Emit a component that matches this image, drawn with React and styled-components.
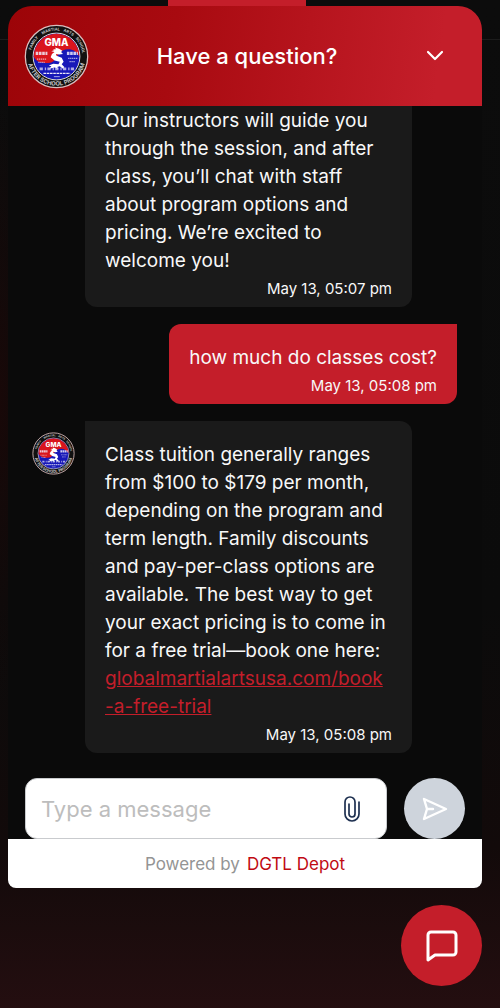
import { useId, useState } from 'react';
import styled, { createGlobalStyle } from 'styled-components';

const GlobalStyle = createGlobalStyle`
  * {
    box-sizing: border-box;
  }
  body {
    margin: 0;
    background-color: #0b0b0b;
    font-family: Inter, 'Liberation Sans', sans-serif;
  }
  button, input {
    font-family: inherit;
  }
`;

const Page = styled.div`
  position: relative;
  display: flex;
  flex-direction: column;
  height: 100vh;
  padding: 6px 18px 22px 8px;
  background:
    radial-gradient(ellipse 40px 300px at 0 400px, #180808, transparent),
    linear-gradient(#0c0c0c 0, #0b0b0b 60%, #120a0a 84%, #240e10 100%);
`;

const PageTab = styled.div`
  position: absolute;
  top: 0;
  left: 168px;
  width: 138px;
  height: 20px;
  background-color: #c41e2a;
`;

const PageRule = styled.div`
  position: absolute;
  top: 39px;
  left: 0;
  right: 0;
  height: 1px;
  background-color: #1c1c1c;
`;

const Chat = styled.section`
  position: relative;
  display: flex;
  flex-direction: column;
  flex: 1;
  min-height: 0;
  overflow: hidden;
  border-radius: 24px 24px 8px 8px;
  background-color: #0a0a0a;
`;

const Header = styled.header`
  display: grid;
  flex-shrink: 0;
  grid-template-columns: 66px 1fr 62px;
  align-items: center;
  height: 100px;
  padding: 0 16px;
  background: linear-gradient(98deg, #9c0408, #a80a10 35%, #c41e2a 90%);
`;

const Title = styled.h1`
  margin: 0;
  color: white;
  font-size: 22px;
  line-height: 28px;
  font-weight: 500;
  text-align: center;
`;

const IconButton = styled.button`
  display: flex;
  justify-content: center;
  padding: 0;
  border: 0;
  background: none;
  cursor: pointer;
`;

const Messages = styled.div`
  display: flex;
  flex-direction: column;
  justify-content: flex-end;
  flex: 1;
  min-height: 0;
  gap: 17px;
  overflow: hidden;
  padding: 0 25px 25px 24px;
`;

const Row = styled.div`
  display: flex;
  flex-shrink: 0;
  justify-content: ${({ $mine }) => ($mine ? 'flex-end' : 'flex-start')};
`;

const AvatarSlot = styled.div`
  flex: 0 0 53px;
  padding-top: 11px;
`;

const Bubble = styled.div`
  max-width: 327px;
  padding: 20px 20px 5px;
  border-radius: ${({ $mine }) => ($mine ? '12px 0 12px 12px' : '0 12px 12px 12px')};
  background-color: ${({ $mine }) => ($mine ? '#c41e2a' : '#1a1a1a')};
  color: #f8f8f8;
`;

const Text = styled.p`
  margin: 0;
  font-size: 19px;
  line-height: 28px;
`;

const Time = styled.time`
  display: block;
  font-size: 15px;
  line-height: 27px;
  text-align: right;
`;

const TrialLink = styled.a`
  color: #c41e2a;
  white-space: nowrap;
`;

const Composer = styled.form`
  display: flex;
  flex-shrink: 0;
  gap: 17px;
  padding: 0 17px;
`;

const Field = styled.div`
  display: flex;
  align-items: center;
  flex: 1;
  min-width: 0;
  height: 61px;
  padding: 0 16px 0 15px;
  border: 1px solid #c9cbce;
  border-radius: 12px;
  background-color: white;
`;

const Input = styled.input`
  flex: 1;
  min-width: 0;
  padding: 0;
  border: 0;
  outline: 0;
  background: none;
  color: #222;
  font-size: 22px;
  line-height: 28px;
  &::placeholder {
    color: #bdbdbd;
  }
`;

const AttachButton = styled(IconButton)`
  width: 36px;
`;

const RoundButton = styled.button`
  display: flex;
  align-items: center;
  justify-content: center;
  flex-shrink: 0;
  width: ${({ $size }) => $size}px;
  height: ${({ $size }) => $size}px;
  padding: 0;
  border: 0;
  border-radius: 50%;
  background-color: ${({ $color }) => $color};
  cursor: pointer;
`;

const Footer = styled.footer`
  display: flex;
  align-items: center;
  justify-content: center;
  flex-shrink: 0;
  gap: 7px;
  height: 49px;
  background-color: white;
  color: #949494;
  font-size: 17px;
`;

const FooterLink = styled.a`
  color: #c00a12;
  text-decoration: none;
`;

const Launcher = styled.div`
  display: flex;
  justify-content: flex-end;
  padding-top: 17px;
`;

const Logo = ({ size }) => {
  const id = useId();
  return (
    <svg width={size} height={size} viewBox="0 0 100 100" role="img" aria-label="GMA" style={{ display: 'block' }}>
      <defs>
        <path id={`${id}top`} d="M10 50a40 40 0 0 1 80 0" />
        <path id={`${id}bottom`} d="M5 50a45 45 0 0 0 90 0" />
      </defs>
      <circle cx="50" cy="50" r="48" fill="#111" stroke="#d9bcbc" strokeWidth="2" />
      <circle cx="50" cy="50" r="36" fill="#1718b8" stroke="#ddd" strokeWidth="1.5" />
      <path d="M15 50a35 35 0 0 1 70 0c-5-12-22-15-31-5-6 8-7 15-17 15S19 59 15 50z" fill="#d9151d" />
      <g fill="#c4c4c4" fontWeight="700" textAnchor="middle" fontSize="6">
        <text><textPath href={`#${id}top`} startOffset="17%">FAMILY</textPath></text>
        <text><textPath href={`#${id}top`} startOffset="43%">MARTIAL</textPath></text>
        <text><textPath href={`#${id}top`} startOffset="65%">ARTS</textPath></text>
        <text><textPath href={`#${id}top`} startOffset="86%">SCHOOL</textPath></text>
        <text fontSize="9"><textPath href={`#${id}bottom`} startOffset="50%">AFTER SCHOOL PROGRAM</textPath></text>
      </g>
      <text x="50" y="34" fill="white" fontSize="15" fontWeight="800" textAnchor="middle">GMA</text>
      <path d="M48 36l6 2 5 3-2 2 3 3-6 1-5-1 1 3 8 3 3 6-3 4 4 4-2 3-5-4-4 1 2 3-6-2-8 2 3-4-4-1 7-3 8 1 2-4-8-2-6-5 2-5 4-3-5-1 5-2-3-1 5 0z" fill="white" />
      <g fill="none" stroke="#eeeaf8">
        <path d="M18 45h18M66 45h17" strokeWidth="5" strokeDasharray="4 1" opacity=".85" />
        <path d="M20 54h14M68 53h14M22 59h10M70 58h9" strokeWidth="2" strokeDasharray="2 1" opacity=".7" />
        <path d="M24 69h53" strokeWidth="4" strokeDasharray="5 3 2 2" opacity=".7" />
        <path d="M30 76h41" strokeWidth="2" strokeDasharray="4 1" />
        <path d="M46 81h9" strokeWidth="1.5" opacity=".7" />
      </g>
    </svg>
  );
};

const ChevronIcon = () => (
  <svg width="18" height="12" viewBox="0 0 18 12" fill="none" stroke="white" strokeWidth="2.2" strokeLinecap="round" strokeLinejoin="round">
    <path d="M2 2l7 7 7-7" />
  </svg>
);

const ClipIcon = () => (
  <svg width="16" height="26" viewBox="0 0 16 26" fill="none" stroke="#1e3050" strokeWidth="1.7" strokeLinecap="round">
    <path d="M15 6v12a7 7 0 0 1-14 0V6a5 5 0 0 1 10 0v12a3 3 0 0 1-6 0V8" />
  </svg>
);

const SendIcon = () => (
  <svg width="26" height="24" viewBox="0 0 26 24" fill="none" stroke="white" strokeWidth="2.4" strokeLinecap="round" strokeLinejoin="round">
    <path d="M2 2l22 10L2 22l3-10zM5 12h6" />
  </svg>
);

const ChatIcon = () => (
  <svg width="32" height="32" viewBox="0 0 32 32" fill="none" stroke="white" strokeWidth="3" strokeLinejoin="round">
    <path d="M2 30V5a3 3 0 0 1 3-3h22a3 3 0 0 1 3 3v17a3 3 0 0 1-3 3H9z" />
  </svg>
);

const Message = ({ mine, avatar, time, children }) => (
  <Row $mine={mine}>
    {!mine && <AvatarSlot>{avatar && <Logo size={43} />}</AvatarSlot>}
    <Bubble $mine={mine}>
      <Text>{children}</Text>
      <Time>{time}</Time>
    </Bubble>
  </Row>
);

const App = () => {
  const [message, setMessage] = useState('');

  return (
    <>
      <GlobalStyle />
      <Page>
        <PageTab />
        <PageRule />
        <Chat>
          <Header>
            <Logo size={65} />
            <Title>Have a question?</Title>
            <IconButton type="button" aria-label="Close chat"><ChevronIcon /></IconButton>
          </Header>
          <Messages>
            <Message time="May 13, 05:07 pm">
              Our instructors will guide you through the session, and after class, you’ll chat with staff about program options and pricing. We’re excited to welcome you!
            </Message>
            <Message mine time="May 13, 05:08 pm">how much do classes cost?</Message>
            <Message avatar time="May 13, 05:08 pm">
              Class tuition generally ranges from $100 to $179 per month, depending on the program and term length. Family discounts and pay-per-class options are available. The best way to get your exact pricing is to come in for a free trial—book one here:{' '}
              <TrialLink href="#trial">globalmartialartsusa.com/book<wbr />-a-free-trial</TrialLink>
            </Message>
          </Messages>
          <Composer onSubmit={(e) => e.preventDefault()}>
            <Field>
              <Input
                aria-label="Type a message"
                placeholder="Type a message"
                value={message}
                onChange={(e) => setMessage(e.target.value)}
              />
              <AttachButton type="button" aria-label="Attach a file"><ClipIcon /></AttachButton>
            </Field>
            <RoundButton type="submit" aria-label="Send" $size={61} $color="#ced4dc"><SendIcon /></RoundButton>
          </Composer>
          <Footer>
            <span>Powered by</span>
            <FooterLink href="#depot">DGTL Depot</FooterLink>
          </Footer>
        </Chat>
        <Launcher>
          <RoundButton type="button" aria-label="Toggle chat" $size={81} $color="#c41e2a"><ChatIcon /></RoundButton>
        </Launcher>
      </Page>
    </>
  );
};

export default App;
